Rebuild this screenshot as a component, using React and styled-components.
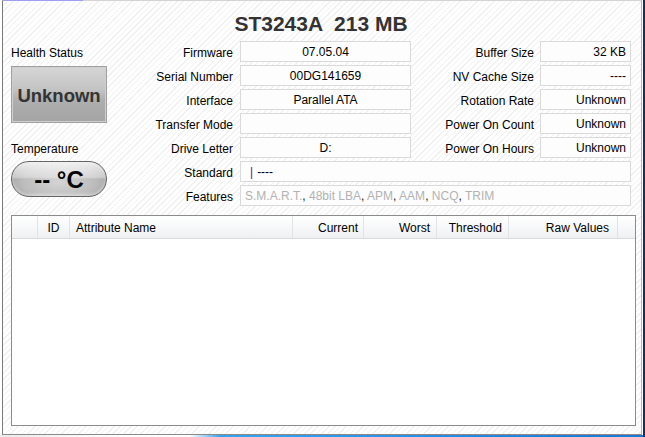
import React from 'react'
import styled, { createGlobalStyle } from 'styled-components'

const GlobalStyle = createGlobalStyle`
  html, body {
    margin: 0;
    padding: 0;
    background: #ffffff;
  }
  body {
    font-family: "Liberation Sans", Arial, sans-serif;
    font-size: 12px;
    color: #000;
  }
`

const leftRows = [
  ['Firmware', '07.05.04'],
  ['Serial Number', '00DG141659'],
  ['Interface', 'Parallel ATA'],
  ['Transfer Mode', ''],
  ['Drive Letter', 'D:'],
]

const rightRows = [
  ['Buffer Size', '32 KB'],
  ['NV Cache Size', '----'],
  ['Rotation Rate', 'Unknown'],
  ['Power On Count', 'Unknown'],
  ['Power On Hours', 'Unknown'],
]

const features = ['S.M.A.R.T.', '48bit LBA', 'APM', 'AAM', 'NCQ', 'TRIM']

const columns = [
  { title: '', width: 26, align: 'left' },
  { title: 'ID', width: 32, align: 'center' },
  { title: 'Attribute Name', width: 223, align: 'left', pad: 6 },
  { title: 'Current', width: 71, align: 'right', pad: 5 },
  { title: 'Worst', width: 73, align: 'right', pad: 6 },
  { title: 'Threshold', width: 72, align: 'right', pad: 6 },
  { title: 'Raw Values', width: 109, align: 'right', pad: 8 },
]

const App = () => {
  return (
    <Window>
      <GlobalStyle />
      <Panel>
        <Title>ST3243A  213 MB</Title>

        <InfoGrid>
          <StatusColumn>
            <SideLabel>Health Status</SideLabel>
            <HealthBox>Unknown</HealthBox>
            <SideLabel $gap={14}>Temperature</SideLabel>
            <TempPill>-- °C</TempPill>
          </StatusColumn>

          {leftRows.map(([label, value], i) => (
            <React.Fragment key={label}>
              <Label $col={2} $row={i + 1}>{label}</Label>
              <ValueBox $col={3} $row={i + 1} $align="center">{value}</ValueBox>
              <Label $col={4} $row={i + 1}>{rightRows[i][0]}</Label>
              <ValueBox $col={5} $row={i + 1} $align="right">{rightRows[i][1]}</ValueBox>
            </React.Fragment>
          ))}

          <Label $col={2} $row={6}>Standard</Label>
          <WideBox $row={6}>
            <Caret>|</Caret>----
          </WideBox>

          <Label $col={2} $row={7}>Features</Label>
          <WideBox $row={7}>
            {features.map((f, i) => (
              <React.Fragment key={f}>
                <Feature>{f}</Feature>
                {i < features.length - 1 && <Comma>, </Comma>}
              </React.Fragment>
            ))}
          </WideBox>
        </InfoGrid>

        <AttrTable>
          <HeaderRow>
            {columns.map((c, i) => (
              <HeaderCell key={i} $w={c.width} $align={c.align} $pad={c.pad}>
                {c.title}
              </HeaderCell>
            ))}
            <HeaderFill />
          </HeaderRow>
        </AttrTable>
      </Panel>
      <BottomStrip />
    </Window>
  )
}

const Window = styled.div`
  width: 645px;
  height: 437px;
  box-sizing: border-box;
  border-right: 2px solid #12305f;
  display: flex;
  flex-direction: column;
  background: #fff;
  overflow: hidden;
`

const Panel = styled.div`
  position: relative;
  margin-left: 2px;
  width: 640px;
  height: 435px;
  box-sizing: border-box;
  border-left: 1px solid #7a7a7a;
  border-bottom: 1px solid #8a8a8a;
  border-right: 1px solid #b4b4b4;
  border-top: 1px solid #d4d4d4;
  display: flex;
  flex-direction: column;
  background: repeating-linear-gradient(
    135deg,
    #ffffff 0px,
    #ffffff 3px,
    #f1f1f1 3px,
    #f1f1f1 4px
  );

  &::before {
    content: '';
    position: absolute;
    left: 0;
    top: -1px;
    width: 80px;
    height: 1px;
    background: #9e9ef2;
  }
`

const BottomStrip = styled.div`
  height: 2px;
  background: linear-gradient(
    to right,
    rgba(230, 230, 230, 0.8) 0px,
    rgba(255, 255, 255, 0) 120px,
    rgba(255, 255, 255, 0) 190px,
    #37a3f0 220px,
    #1a78d2 100%
  );
`

const Title = styled.div`
  height: 33px;
  padding-top: 7px;
  line-height: 31px;
  text-align: center;
  font-size: 21px;
  font-weight: bold;
  color: #333333;
  white-space: pre;
  padding-right: 2px;
`

const InfoGrid = styled.div`
  display: grid;
  grid-template-columns: 96px 133px 171px 129px 91px;
  grid-template-rows: repeat(7, 21px);
  row-gap: 3px;
  padding-left: 8px;
`

const StatusColumn = styled.div`
  grid-column: 1;
  grid-row: 1 / span 7;
  display: flex;
  flex-direction: column;
  align-items: flex-start;
`

const SideLabel = styled.div`
  height: 18px;
  padding-top: 3px;
  line-height: 18px;
  margin-top: ${({ $gap }) => $gap || 0}px;
`

const HealthBox = styled.div`
  margin-top: 4px;
  width: 96px;
  height: 57px;
  box-sizing: border-box;
  border: 1px solid #a0a0a0;
  box-shadow: inset 0 0 0 1px #cfcfcf;
  background: linear-gradient(
    to bottom,
    #d6d6d6 0%,
    #c4c4c4 40%,
    #afafaf 60%,
    #a4a4a4 100%
  );
  display: flex;
  align-items: center;
  justify-content: center;
  padding-top: 2px;
  font-size: 18.5px;
  font-weight: bold;
  color: #333333;
`

const TempPill = styled.div`
  margin-top: 3px;
  width: 96px;
  height: 36px;
  box-sizing: border-box;
  border: 1px solid #646464;
  border-radius: 18px;
  background:
    linear-gradient(
      to bottom,
      rgba(255, 255, 255, 0.85) 0%,
      rgba(255, 255, 255, 0.35) 45%,
      rgba(255, 255, 255, 0) 50%
    ),
    radial-gradient(
      ellipse at 50% 60%,
      #d4d4d4 0%,
      #bcbcbc 55%,
      #8e8e8e 100%
    );
  box-shadow: inset 0 -2px 3px rgba(255, 255, 255, 0.4);
  display: flex;
  align-items: center;
  justify-content: center;
  padding-top: 2px;
  font-size: 24px;
  font-weight: bold;
  color: #000;
`

const Label = styled.div`
  grid-column: ${({ $col }) => $col};
  grid-row: ${({ $row }) => $row};
  text-align: right;
  padding-top: 3px;
  line-height: 18px;
  padding-right: ${({ $col }) => ($col === 2 ? 7 : 6)}px;
  white-space: nowrap;
`

const ValueBox = styled.div`
  grid-column: ${({ $col }) => $col};
  grid-row: ${({ $row }) => $row};
  box-sizing: border-box;
  border: 1px solid #dadada;
  background: #fdfdfd;
  padding-top: 2px;
  line-height: 17px;
  text-align: ${({ $align }) => $align};
  padding-right: ${({ $align }) => ($align === 'right' ? '4px' : '0')};
  white-space: nowrap;
  overflow: hidden;
`

const WideBox = styled.div`
  grid-column: 3 / span 3;
  grid-row: ${({ $row }) => $row};
  box-sizing: border-box;
  border: 1px solid #dadada;
  background: #fdfdfd;
  padding-top: 2px;
  line-height: 17px;
  padding-left: 4px;
  white-space: pre;
  overflow: hidden;
`

const Caret = styled.span`
  color: #800080;
  margin-left: 5px;
  margin-right: 4px;
`

const Feature = styled.span`
  color: #b2b2b2;
`

const Comma = styled.span`
  color: #222;
`

const AttrTable = styled.div`
  flex: 1;
  margin: 9px 5px 8px 8px;
  border: 1px solid #8c8c8c;
  background: #ffffff;
  display: flex;
  flex-direction: column;
`

const HeaderRow = styled.div`
  display: flex;
  height: 23px;
  box-sizing: border-box;
  border-bottom: 1px solid #d9dbe0;
  background: linear-gradient(to bottom, #ffffff 0%, #f7f8f9 50%, #eff0f2 100%);
`

const HeaderCell = styled.div`
  width: ${({ $w }) => $w}px;
  flex: none;
  box-sizing: border-box;
  border-right: 1px solid #e2e3e6;
  padding-top: 2px;
  line-height: 20px;
  text-align: ${({ $align }) => $align};
  padding-right: ${({ $align, $pad }) => ($align === 'right' ? $pad : 0)}px;
  padding-left: ${({ $align, $pad }) => ($align === 'left' ? $pad || 0 : 0)}px;
  white-space: nowrap;
`

const HeaderFill = styled.div`
  flex: 1;
`

export default App
